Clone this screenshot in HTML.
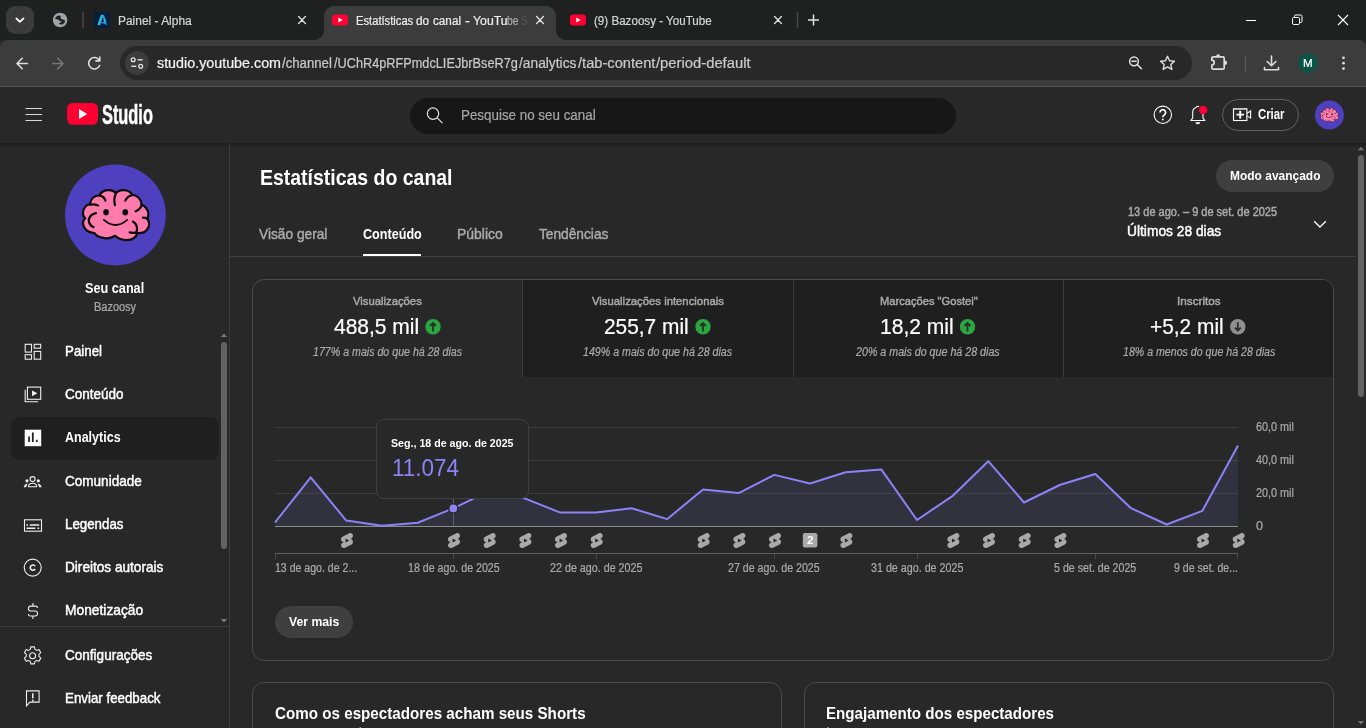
<!DOCTYPE html>
<html lang="pt-BR">
<head>
<meta charset="utf-8">
<title>Estatísticas do canal - YouTube Studio</title>
<style>
*{box-sizing:border-box;margin:0;padding:0}
html,body{width:1366px;height:728px;overflow:hidden;background:#282828}
body{position:relative;font-family:"Liberation Sans",sans-serif;color:#fff}
.a{position:absolute}
.t{position:absolute;white-space:nowrap;line-height:1;transform-origin:0 50%;-webkit-text-stroke:0.22px}
svg{position:absolute;overflow:visible}
#txt{left:0;top:0;width:1366px;height:728px;will-change:transform}
/* chrome */
#strip{left:0;top:0;width:1366px;height:40px;background:#1f2020}
#toolbar{left:0;top:40px;width:1366px;height:46px;background:#3c3c3c;border-radius:8px 8px 0 0}
#tbsep{left:0;top:86px;width:1366px;height:1px;background:#4f4f4f}
#acttab{left:324px;top:6px;width:232px;height:34px;background:#3c3c3c;border-radius:10px 10px 0 0}
#acttab:before,#acttab:after{content:"";position:absolute;bottom:0;width:10px;height:10px}
#acttab:before{left:-10px;background:radial-gradient(circle at 0 0,rgba(0,0,0,0) 9.5px,#3c3c3c 10.5px)}
#acttab:after{right:-10px;background:radial-gradient(circle at 100% 0,rgba(0,0,0,0) 9.5px,#3c3c3c 10.5px)}
#tabdd{left:6px;top:6px;width:28px;height:28px;border-radius:9px;background:#3b3b3b}
#omni{left:120px;top:46px;width:1072px;height:34px;border-radius:17px;background:#282828}
#siteinfo{left:125px;top:51px;width:24px;height:24px;border-radius:12px;background:#3c3c3c}
#prof{left:1298px;top:53px;width:20px;height:20px;border-radius:10px;background:#0b5345}
/* yt header */
#ythead{left:0;top:87px;width:1366px;height:56px;background:#282828}
#ytshadow{left:0;top:143px;width:1366px;height:5px;background:linear-gradient(rgba(0,0,0,.28),rgba(0,0,0,0))}
#search{left:410px;top:98px;width:546px;height:36px;border-radius:18px;background:#171717}
#criar{left:1222px;top:99px;width:77px;height:32px;border-radius:16px;border:1px solid #606060}
/* sidebar */
#sideline{left:229px;top:143px;width:1px;height:585px;background:#3d3d3d}
#sel{left:11px;top:417px;width:208px;height:43px;border-radius:9px;background:#1f1f1f}
#sdiv{left:0;top:626px;width:229px;height:1px;background:#3d3d3d}
#sthumb{left:221px;top:342px;width:6px;height:207px;border-radius:3px;background:#626262}
/* main */
#tabline{left:230px;top:256px;width:1126px;height:1px;background:#3f3f3f}
#tabul{left:363px;top:254px;width:58px;height:2px;background:#fff}
#modo{left:1216px;top:160px;width:118px;height:32px;border-radius:16px;background:#3f3f3f}
#pthumb{left:1358px;top:155px;width:6px;height:242px;border-radius:3px;background:#626262}
.card{border:1px solid #4c4c4c;border-radius:12px}
#card1{left:252px;top:279px;width:1082px;height:382px;overflow:hidden}
#card2{left:252px;top:682px;width:530px;height:80px}
#card3{left:804px;top:682px;width:530px;height:80px}
.mt{position:absolute;top:0;height:97px;background:#1f1f1f;border-left:1px solid #3d3d3d}
#vermais{left:275px;top:606px;width:78px;height:32px;border-radius:16px;background:#3f3f3f}
#tip{left:376px;top:419px;width:153px;height:80px;border-radius:8px;background:#282828;border:1px solid #404040}
</style>
</head>
<body>
<!-- browser chrome -->
<div class="a" id="strip"></div>
<div class="a" id="tabdd"></div>
<div class="a" id="acttab"></div>
<div class="a" id="toolbar"></div>
<div class="a" id="tbsep"></div>
<div class="a" id="omni"></div>
<div class="a" id="siteinfo"></div>
<div class="a" id="prof"></div>
<svg class="a" style="left:0;top:0" width="1366" height="87" viewBox="0 0 1366 87" fill="none">
<!-- tab search chevron -->
<path d="M16.300 18.300l3.600 3.600 3.600-3.600" stroke="#fff" stroke-width="1.7" stroke-linecap="round" stroke-linejoin="round"/>
<!-- globe tab -->
<circle cx="60.100" cy="20" r="7.250" fill="#a1a4a8"/>
<g transform="translate(50 8) scale(0.04686)"><path d="M108 238C118 190 150 160 200 158L232 170C215 195 222 222 250 236C280 248 305 255 322 272C322 300 305 330 270 348C240 356 205 352 185 325C215 322 240 305 248 282C225 285 200 278 185 258C165 240 135 235 108 238Z" fill="#1f2020"/></g>
<path d="M83 12v16" stroke="#4a4a4a" stroke-width="1.4"/>
<!-- alpha favicon -->
<rect x="94" y="12" width="16.100" height="16" fill="#061f3d"/>
<path d="M101 14.800h2.200l-3 10.100h-2.700z" fill="#27c8ea"/>
<path d="M102.500 15.400l1.300-.4 2.800 7.600-2.400.3z" fill="#2fb0f0"/>
<path d="M99.800 22.600c2.400-.5 4.800.1 7 1.800" stroke="#2a86d8" stroke-width="1.400"/>
<!-- tab close x -->
<path d="M298.6 16.600l6.800 6.800m0-6.800l-6.800 6.800M536.600 16.600l6.800 6.800m0-6.800l-6.800 6.800M774.600 16.600l6.800 6.800m0-6.800l-6.800 6.800" stroke="#dcdcdc" stroke-width="1.4" stroke-linecap="round"/>
<!-- yt favicons -->
<rect x="332" y="14.500" width="16" height="11" rx="3" fill="#ff0033"/>
<path d="M338.300 17.400v5.200l4.400-2.600z" fill="#fff"/>
<rect x="570" y="14.500" width="16" height="11" rx="3" fill="#ff0033"/>
<path d="M576.300 17.400v5.200l4.400-2.600z" fill="#fff"/>
<!-- tab separator + new tab -->
<path d="M797.500 12v16" stroke="#4a4a4a" stroke-width="1.4"/>
<path d="M813.500 14.500v11M808 20h11" stroke="#e3e3e3" stroke-width="1.500"/>
<!-- window controls -->
<path d="M1246 20.500h10" stroke="#fff" stroke-width="1"/>
<rect x="1292.500" y="17.500" width="7" height="7" rx="1.2" stroke="#fff" stroke-width="1"/>
<path d="M1294.500 17.500v-1.200a1.300 1.300 0 0 1 1.300-1.300h4.900a1.300 1.300 0 0 1 1.300 1.300v4.900a1.300 1.300 0 0 1-1.300 1.300h-1.200" stroke="#fff" stroke-width="1"/>
<path d="M1338 15l10 10m0-10l-10 10" stroke="#fff" stroke-width="1.100"/>
<!-- nav: back, forward, reload -->
<path d="M27.300 63.500H17.200m5-5.200l-5.200 5.200 5.200 5.200" stroke="#dedede" stroke-width="1.600" stroke-linejoin="round" stroke-linecap="round"/>
<path d="M52.700 63.500h10.100m-5-5.200l5.200 5.200-5.200 5.200" stroke="#777" stroke-width="1.600" stroke-linejoin="round" stroke-linecap="round"/>
<path d="M99.200 60.200A5.700 5.700 0 1 0 99.600 65.500" stroke="#dedede" stroke-width="1.600" stroke-linecap="round"/>
<path d="M99.800 57v3.900h-3.900" stroke="#dedede" stroke-width="1.600" stroke-linejoin="round" stroke-linecap="round"/>
<!-- site info (tune) -->
<circle cx="133.200" cy="59.800" r="1.900" stroke="#e3e3e3" stroke-width="1.300"/>
<path d="M137.600 59.800h5" stroke="#e3e3e3" stroke-width="1.400"/>
<circle cx="140.700" cy="66.300" r="1.900" stroke="#e3e3e3" stroke-width="1.300"/>
<path d="M131.300 66.300h5" stroke="#e3e3e3" stroke-width="1.400"/>
<!-- zoom icon -->
<circle cx="1134" cy="61.300" r="4.400" stroke="#dedede" stroke-width="1.500"/>
<path d="M1137.300 64.600l4.200 4.200M1131.800 61.300h4.400" stroke="#dedede" stroke-width="1.500" stroke-linecap="round"/>
<!-- star -->
<path d="M1167.500 56.300l2.050 4.500 4.900.5-3.650 3.300 1.050 4.800-4.350-2.500-4.350 2.500 1.050-4.800-3.650-3.300 4.900-.5z" stroke="#dedede" stroke-width="1.400" stroke-linejoin="round"/>
<!-- extensions puzzle -->
<path d="M1213.300 56.800H1222.700a1.500 1.500 0 0 1 1.500 1.500V67.700a1.500 1.500 0 0 1-1.500 1.500H1213.300a1.500 1.500 0 0 1-1.500-1.500V65a2.400 2.400 0 0 0 0-4.800V58.300a1.500 1.500 0 0 1 1.500-1.500z" stroke="#dedede" stroke-width="1.700" stroke-linejoin="round"/>
<path d="M1216.200 56.200a1.900 2 0 0 1 3.800 0zM1224.800 60.600a2.300 2.200 0 0 1 0 4.400z" fill="#dedede"/>
<path d="M1245.500 55.500v16" stroke="#5a5a5a" stroke-width="1.200"/>
<!-- download -->
<path d="M1271.500 56v9.500m-4.300-4l4.300 4.200 4.300-4.200M1264.500 67.500v2.300h14v-2.300" stroke="#dedede" stroke-width="1.600" stroke-linejoin="round" stroke-linecap="round"/>
<!-- kebab -->
<circle cx="1343.500" cy="57.800" r="1.400" fill="#dedede"/><circle cx="1343.500" cy="63.200" r="1.400" fill="#dedede"/><circle cx="1343.500" cy="68.600" r="1.400" fill="#dedede"/>
</svg>

<!-- youtube header -->
<div class="a" id="ythead"></div>
<div class="a" id="ytshadow"></div>
<div class="a" id="search"></div>
<div class="a" id="criar"></div>
<svg class="a" style="left:0;top:87px" width="1366" height="60" viewBox="0 87 1366 60" fill="none" stroke="#fff" stroke-width="1.100">
<!-- hamburger -->
<path d="M25.500 108.500h16.500M25.500 114.500h16.500M25.500 120.500h16.500" stroke="#d8d8d8" stroke-width="1"/>
<!-- yt logo -->
<rect x="67.100" y="103" width="30.900" height="21.800" rx="5.500" fill="#ff0033" stroke="none"/>
<path d="M79 109v10l8.200-5z" fill="#fff" stroke="none"/>
<!-- search -->
<circle cx="433" cy="113.600" r="5.700" stroke="#e6e6e6" stroke-width="1.200"/><path d="M437.200 117.800l5.300 5.300" stroke="#e6e6e6" stroke-width="1.200"/>
<!-- help -->
<circle cx="1162.800" cy="114.800" r="8.700"/>
<path d="M1160 112.600a2.800 2.800 0 1 1 4.300 2.300c-.9.600-1.500 1.100-1.500 2.300" stroke-width="1.700"/><circle cx="1162.800" cy="119.500" r="1" fill="#fff" stroke="none"/>
<!-- bell -->
<path d="M1196 107.600a5 5 0 0 0-3.300 4.800v5.700l-1.900 2.400h14.100l-1.900-2.400v-5.700" stroke-linejoin="round"/>
<path d="M1196.300 107.500a1.400 1.400 0 0 1 2.600-.4" />
<path d="M1195.400 122.300a2.400 2 0 0 0 4.800 0z" fill="#fff" stroke="none"/>
<circle cx="1203.100" cy="110" r="4.200" fill="#ff0033" stroke="none"/>
<!-- create -->
<rect x="1233.500" y="108.700" width="13.400" height="11.800"/>
<path d="M1247 113.300l3.600-2.200v7l-3.600-2.200"/><path d="M1233.500 109.200h13.400" stroke="#bbb" stroke-width="1.200"/>
<path d="M1240.200 110.800v7.600M1236.400 114.600h7.600" stroke-width="1.900"/>
<!-- avatar -->
<circle cx="1329.400" cy="114.900" r="14.500" fill="#4f40c0" stroke="none"/>
<g transform="translate(1329.4 114.9) scale(0.02663) translate(-475 -365)"><path d="M135 340 C140 290 170 258 208 250 C215 195 255 160 305 160 C325 120 365 103 410 105 C440 106 462 118 478 138 C495 115 525 103 560 105 C600 107 630 125 645 152 C700 160 740 200 745 255 C790 280 815 315 815 355 C815 375 810 390 802 402 C825 430 830 475 805 510 C785 540 745 555 700 552 C690 595 650 625 590 625 C540 625 500 608 470 580 C430 605 380 612 335 600 C295 592 270 575 255 552 C200 550 155 520 140 475 C130 445 138 415 158 398 C140 385 132 362 135 340 Z" fill="#ff7bac" stroke="#0d0d0d" stroke-width="17" stroke-linejoin="round"/><path d="M308 162 Q360 172 368 215 M478 138 Q450 195 468 262 M642 160 Q595 170 575 215 M745 262 Q730 310 682 325 M206 256 Q250 248 292 265 M270 345 Q208 360 195 412 Q196 470 245 490 M655 432 Q712 470 692 545 Q660 556 620 545 M806 402 Q785 393 758 392" fill="none" stroke="#0d0d0d" stroke-width="17" stroke-linecap="round"/><ellipse cx="375" cy="335" rx="30" ry="33" fill="#0d0d0d"/><ellipse cx="575" cy="335" rx="30" ry="33" fill="#0d0d0d"/><path d="M352 415 Q472 522 595 415" fill="none" stroke="#0d0d0d" stroke-width="19" stroke-linecap="round"/></g>
</svg>
<!-- sidebar -->
<div class="a" id="sideline"></div>
<div class="a" id="sel"></div>
<div class="a" id="sdiv"></div>
<div class="a" id="sthumb"></div>
<svg class="a" style="left:0;top:0" width="240" height="728" viewBox="0 0 240 728" fill="none" stroke="#ededed" stroke-width="1.1">
<circle cx="115.400" cy="215" r="50.400" fill="#4f40c0" stroke="none"/>
<g transform="translate(70 180) scale(0.09615)"><path d="M135 340 C140 290 170 258 208 250 C215 195 255 160 305 160 C325 120 365 103 410 105 C440 106 462 118 478 138 C495 115 525 103 560 105 C600 107 630 125 645 152 C700 160 740 200 745 255 C790 280 815 315 815 355 C815 375 810 390 802 402 C825 430 830 475 805 510 C785 540 745 555 700 552 C690 595 650 625 590 625 C540 625 500 608 470 580 C430 605 380 612 335 600 C295 592 270 575 255 552 C200 550 155 520 140 475 C130 445 138 415 158 398 C140 385 132 362 135 340 Z" fill="#ff7bac" stroke="#0d0d0d" stroke-width="23" stroke-linejoin="round"/><path d="M308 162 Q360 172 368 215 M478 138 Q450 195 468 262 M642 160 Q595 170 575 215 M745 262 Q730 310 682 325 M206 256 Q250 248 292 265 M270 345 Q208 360 195 412 Q196 470 245 490 M655 432 Q712 470 692 545 Q660 556 620 545 M806 402 Q785 393 758 392" fill="none" stroke="#0d0d0d" stroke-width="23" stroke-linecap="round"/><ellipse cx="375" cy="335" rx="30" ry="33" fill="#0d0d0d"/><ellipse cx="575" cy="335" rx="30" ry="33" fill="#0d0d0d"/><path d="M352 415 Q472 522 595 415" fill="none" stroke="#0d0d0d" stroke-width="19" stroke-linecap="round"/></g>
<!-- painel -->
<rect x="25.200" y="344.300" width="6.300" height="7.800"/><rect x="34.200" y="344.300" width="6.500" height="3.900"/>
<rect x="25.200" y="354.700" width="6.300" height="4.500"/><rect x="34.200" y="351.400" width="6.500" height="7.800"/>
<!-- conteudo -->
<rect x="27.400" y="387.100" width="13.300" height="12.200"/><path d="M25.200 389.800v12h13"/>
<path d="M32 390.400v5.800l5.400-2.900z" fill="#ededed" stroke="none"/>
<!-- analytics -->
<rect x="24.700" y="429.700" width="16.500" height="16.500" fill="#fff" stroke="none"/>
<path d="M28.200 436.500h1.700v5.500h-1.700zM31.900 432.600h1.800v9.400h-1.800zM35.900 439.700h1.700v2.300h-1.700z" fill="#1f1f1f" stroke="none"/>
<!-- comunidade -->
<circle cx="32.600" cy="479.100" r="2.500"/><path d="M28.500 486.800c0-2 1.800-3.500 4.100-3.500s4.100 1.500 4.100 3.500z" stroke-linejoin="round"/>
<circle cx="27" cy="480.800" r="1.600" fill="#ededed" stroke="none"/><circle cx="38.300" cy="480.800" r="1.600" fill="#ededed" stroke="none"/>
<path d="M23.700 487.300c.200-2.200 1.600-3.600 3.900-3.900l-1.500 3.900zM41.600 487.300c-.200-2.200-1.600-3.600-3.900-3.900l1.500 3.900z" fill="#ededed" stroke="none"/>
<!-- legendas -->
<rect x="24.500" y="519.800" width="17" height="11.400"/>
<path d="M26.500 524.900h1.500M29.800 524.900h9.400M26.500 528.300h8.800M37.500 528.300h1.700" stroke-width="1.500"/>
<!-- copyright -->
<circle cx="32.700" cy="567.600" r="8.500"/>
<path d="M35.100 566.300a2.600 2.600 0 1 0 0 2.700" stroke-width="1.600"/>
<!-- monetizacao -->
<path d="M32.900 602.900v3.200M32.900 616v3M37.400 608v-.4c0-.9-.7-1.500-1.700-1.500h-5c-1.400 0-2.300 1-2.300 2.400s.9 2.500 2.300 2.500h4.500c1.400 0 2.300 1 2.300 2.500s-.9 2.500-2.300 2.500h-5c-1 0-1.700-.6-1.700-1.500v-.4"/>
<!-- gear -->
<circle cx="32.600" cy="655.700" r="3"/>
<path d="M30.800 646.900h3.600l.5 2.500 1.700 1 2.400-.8 1.800 3.100-1.900 1.700v2l1.900 1.700-1.800 3.100-2.400-.8-1.700 1-.5 2.500h-3.600l-.5-2.500-1.700-1-2.400.8-1.800-3.100 1.900-1.700v-2l-1.900-1.700 1.800-3.100 2.400.8 1.700-1z" stroke-linejoin="round"/>
<!-- feedback -->
<path d="M26.500 690.900h12.600v11.200h-9.100l-3.500 3.700z" stroke-linejoin="miter"/>
<path d="M32.800 693.300v5.200M32.800 699.800v1.600" stroke-width="1.500"/>
<!-- scroll arrows -->
<path d="M220.800 337l3.200-3.400 3.200 3.400zM220.800 619l3.200 3.400 3.200-3.400z" fill="#7a7a7a" stroke="none"/>
</svg>
<!-- main -->
<div class="a" id="tabline"></div>
<div class="a" id="tabul"></div>
<div class="a" id="modo"></div>
<div class="a" id="pthumb"></div>
<div class="a card" id="card1">
<div class="mt" style="left:269px;width:271px"></div>
<div class="mt" style="left:540px;width:270px"></div>
<div class="mt" style="left:810px;width:271px"></div>
</div>
<div class="a card" id="card2"></div>
<div class="a card" id="card3"></div>
<div class="a" id="vermais"></div>
<svg class="a" style="left:0;top:0" width="1366" height="728" viewBox="0 0 1366 728">
<path d="M275 427.5H1238" stroke="#3b3b3b" stroke-width="1"/>
<path d="M275 460.5H1238" stroke="#3b3b3b" stroke-width="1"/>
<path d="M275 493.5H1238" stroke="#3b3b3b" stroke-width="1"/>
<polygon points="275,526 275.0,522.5 310.7,477.3 346.3,520.6 382.0,525.8 417.7,522.8 453.3,508.4 489.0,491 524.7,498.4 560.3,512.6 596.0,512.6 631.7,508.2 667.3,519.1 703.0,489.4 738.7,493.1 774.3,474.9 810.0,483.5 845.7,472.3 881.3,469.4 917.0,520 952.7,495.8 988.3,461.2 1024.0,502.5 1059.7,485 1095.3,474 1131.0,508.2 1166.7,524.5 1202.3,510.9 1238.0,445.4 1238,526" fill="#8b83f6" fill-opacity="0.11"/>
<path d="M275 526.5H1238" stroke="#8c8c8c" stroke-width="1"/>
<polyline points="275.0,522.5 310.7,477.3 346.3,520.6 382.0,525.8 417.7,522.8 453.3,508.4 489.0,491 524.7,498.4 560.3,512.6 596.0,512.6 631.7,508.2 667.3,519.1 703.0,489.4 738.7,493.1 774.3,474.9 810.0,483.5 845.7,472.3 881.3,469.4 917.0,520 952.7,495.8 988.3,461.2 1024.0,502.5 1059.7,485 1095.3,474 1131.0,508.2 1166.7,524.5 1202.3,510.9 1238.0,445.4" fill="none" stroke="#8b83f6" stroke-width="2" stroke-linejoin="round"/>
<path d="M453.5 499V526" stroke="#626262" stroke-width="1"/>
<path d="M275 553.5H1238" stroke="#5e5e5e" stroke-width="1"/>
<path d="M275.5 554V559" stroke="#474747" stroke-width="1"/>
<path d="M453.5 554V559" stroke="#474747" stroke-width="1"/>
<path d="M596.5 554V559" stroke="#474747" stroke-width="1"/>
<path d="M774.5 554V559" stroke="#474747" stroke-width="1"/>
<path d="M917.5 554V559" stroke="#474747" stroke-width="1"/>
<path d="M1095.5 554V559" stroke="#474747" stroke-width="1"/>
<path d="M1237.5 554V559" stroke="#474747" stroke-width="1"/>
<circle cx="453.3" cy="508.4" r="4.6" fill="#8b83f6" stroke="#282828" stroke-width="1.4"/>
<path transform="translate(338.0 531.6) scale(0.75)" fill="#a9a9a9" fill-rule="evenodd" d="M17.77 10.32l-1.2-.5L18 9.06c1.84-.96 2.53-3.23 1.56-5.06s-3.24-2.53-5.07-1.56L6 6.94c-1.29.68-2.07 2.04-2 3.49.07 1.42.93 2.67 2.22 3.25.03.01 1.2.5 1.2.5L6 14.93c-1.83.97-2.53 3.24-1.56 5.07.97 1.83 3.24 2.53 5.07 1.56l8.5-4.5c1.29-.68 2.06-2.04 1.99-3.49-.07-1.42-.94-2.68-2.23-3.25zM10 14.65v-5.3L15 12l-5 2.65z"/>
<path transform="translate(445.0 531.6) scale(0.75)" fill="#a9a9a9" fill-rule="evenodd" d="M17.77 10.32l-1.2-.5L18 9.06c1.84-.96 2.53-3.23 1.56-5.06s-3.24-2.53-5.07-1.56L6 6.94c-1.29.68-2.07 2.04-2 3.49.07 1.42.93 2.67 2.22 3.25.03.01 1.2.5 1.2.5L6 14.93c-1.83.97-2.53 3.24-1.56 5.07.97 1.83 3.24 2.53 5.07 1.56l8.5-4.5c1.29-.68 2.06-2.04 1.99-3.49-.07-1.42-.94-2.68-2.23-3.25zM10 14.65v-5.3L15 12l-5 2.65z"/>
<path transform="translate(480.7 531.6) scale(0.75)" fill="#a9a9a9" fill-rule="evenodd" d="M17.77 10.32l-1.2-.5L18 9.06c1.84-.96 2.53-3.23 1.56-5.06s-3.24-2.53-5.07-1.56L6 6.94c-1.29.68-2.07 2.04-2 3.49.07 1.42.93 2.67 2.22 3.25.03.01 1.2.5 1.2.5L6 14.93c-1.83.97-2.53 3.24-1.56 5.07.97 1.83 3.24 2.53 5.07 1.56l8.5-4.5c1.29-.68 2.06-2.04 1.99-3.49-.07-1.42-.94-2.68-2.23-3.25zM10 14.65v-5.3L15 12l-5 2.65z"/>
<path transform="translate(516.4 531.6) scale(0.75)" fill="#a9a9a9" fill-rule="evenodd" d="M17.77 10.32l-1.2-.5L18 9.06c1.84-.96 2.53-3.23 1.56-5.06s-3.24-2.53-5.07-1.56L6 6.94c-1.29.68-2.07 2.04-2 3.49.07 1.42.93 2.67 2.22 3.25.03.01 1.2.5 1.2.5L6 14.93c-1.83.97-2.53 3.24-1.56 5.07.97 1.83 3.24 2.53 5.07 1.56l8.5-4.5c1.29-.68 2.06-2.04 1.99-3.49-.07-1.42-.94-2.68-2.23-3.25zM10 14.65v-5.3L15 12l-5 2.65z"/>
<path transform="translate(552.0 531.6) scale(0.75)" fill="#a9a9a9" fill-rule="evenodd" d="M17.77 10.32l-1.2-.5L18 9.06c1.84-.96 2.53-3.23 1.56-5.06s-3.24-2.53-5.07-1.56L6 6.94c-1.29.68-2.07 2.04-2 3.49.07 1.42.93 2.67 2.22 3.25.03.01 1.2.5 1.2.5L6 14.93c-1.83.97-2.53 3.24-1.56 5.07.97 1.83 3.24 2.53 5.07 1.56l8.5-4.5c1.29-.68 2.06-2.04 1.99-3.49-.07-1.42-.94-2.68-2.23-3.25zM10 14.65v-5.3L15 12l-5 2.65z"/>
<path transform="translate(587.7 531.6) scale(0.75)" fill="#a9a9a9" fill-rule="evenodd" d="M17.77 10.32l-1.2-.5L18 9.06c1.84-.96 2.53-3.23 1.56-5.06s-3.24-2.53-5.07-1.56L6 6.94c-1.29.68-2.07 2.04-2 3.49.07 1.42.93 2.67 2.22 3.25.03.01 1.2.5 1.2.5L6 14.93c-1.83.97-2.53 3.24-1.56 5.07.97 1.83 3.24 2.53 5.07 1.56l8.5-4.5c1.29-.68 2.06-2.04 1.99-3.49-.07-1.42-.94-2.68-2.23-3.25zM10 14.65v-5.3L15 12l-5 2.65z"/>
<path transform="translate(694.7 531.6) scale(0.75)" fill="#a9a9a9" fill-rule="evenodd" d="M17.77 10.32l-1.2-.5L18 9.06c1.84-.96 2.53-3.23 1.56-5.06s-3.24-2.53-5.07-1.56L6 6.94c-1.29.68-2.07 2.04-2 3.49.07 1.42.93 2.67 2.22 3.25.03.01 1.2.5 1.2.5L6 14.93c-1.83.97-2.53 3.24-1.56 5.07.97 1.83 3.24 2.53 5.07 1.56l8.5-4.5c1.29-.68 2.06-2.04 1.99-3.49-.07-1.42-.94-2.68-2.23-3.25zM10 14.65v-5.3L15 12l-5 2.65z"/>
<path transform="translate(730.4 531.6) scale(0.75)" fill="#a9a9a9" fill-rule="evenodd" d="M17.77 10.32l-1.2-.5L18 9.06c1.84-.96 2.53-3.23 1.56-5.06s-3.24-2.53-5.07-1.56L6 6.94c-1.29.68-2.07 2.04-2 3.49.07 1.42.93 2.67 2.22 3.25.03.01 1.2.5 1.2.5L6 14.93c-1.83.97-2.53 3.24-1.56 5.07.97 1.83 3.24 2.53 5.07 1.56l8.5-4.5c1.29-.68 2.06-2.04 1.99-3.49-.07-1.42-.94-2.68-2.23-3.25zM10 14.65v-5.3L15 12l-5 2.65z"/>
<path transform="translate(766.0 531.6) scale(0.75)" fill="#a9a9a9" fill-rule="evenodd" d="M17.77 10.32l-1.2-.5L18 9.06c1.84-.96 2.53-3.23 1.56-5.06s-3.24-2.53-5.07-1.56L6 6.94c-1.29.68-2.07 2.04-2 3.49.07 1.42.93 2.67 2.22 3.25.03.01 1.2.5 1.2.5L6 14.93c-1.83.97-2.53 3.24-1.56 5.07.97 1.83 3.24 2.53 5.07 1.56l8.5-4.5c1.29-.68 2.06-2.04 1.99-3.49-.07-1.42-.94-2.68-2.23-3.25zM10 14.65v-5.3L15 12l-5 2.65z"/>
<path transform="translate(837.4 531.6) scale(0.75)" fill="#a9a9a9" fill-rule="evenodd" d="M17.77 10.32l-1.2-.5L18 9.06c1.84-.96 2.53-3.23 1.56-5.06s-3.24-2.53-5.07-1.56L6 6.94c-1.29.68-2.07 2.04-2 3.49.07 1.42.93 2.67 2.22 3.25.03.01 1.2.5 1.2.5L6 14.93c-1.83.97-2.53 3.24-1.56 5.07.97 1.83 3.24 2.53 5.07 1.56l8.5-4.5c1.29-.68 2.06-2.04 1.99-3.49-.07-1.42-.94-2.68-2.23-3.25zM10 14.65v-5.3L15 12l-5 2.65z"/>
<path transform="translate(944.4 531.6) scale(0.75)" fill="#a9a9a9" fill-rule="evenodd" d="M17.77 10.32l-1.2-.5L18 9.06c1.84-.96 2.53-3.23 1.56-5.06s-3.24-2.53-5.07-1.56L6 6.94c-1.29.68-2.07 2.04-2 3.49.07 1.42.93 2.67 2.22 3.25.03.01 1.2.5 1.2.5L6 14.93c-1.83.97-2.53 3.24-1.56 5.07.97 1.83 3.24 2.53 5.07 1.56l8.5-4.5c1.29-.68 2.06-2.04 1.99-3.49-.07-1.42-.94-2.68-2.23-3.25zM10 14.65v-5.3L15 12l-5 2.65z"/>
<path transform="translate(980.0 531.6) scale(0.75)" fill="#a9a9a9" fill-rule="evenodd" d="M17.77 10.32l-1.2-.5L18 9.06c1.84-.96 2.53-3.23 1.56-5.06s-3.24-2.53-5.07-1.56L6 6.94c-1.29.68-2.07 2.04-2 3.49.07 1.42.93 2.67 2.22 3.25.03.01 1.2.5 1.2.5L6 14.93c-1.83.97-2.53 3.24-1.56 5.07.97 1.83 3.24 2.53 5.07 1.56l8.5-4.5c1.29-.68 2.06-2.04 1.99-3.49-.07-1.42-.94-2.68-2.23-3.25zM10 14.65v-5.3L15 12l-5 2.65z"/>
<path transform="translate(1015.7 531.6) scale(0.75)" fill="#a9a9a9" fill-rule="evenodd" d="M17.77 10.32l-1.2-.5L18 9.06c1.84-.96 2.53-3.23 1.56-5.06s-3.24-2.53-5.07-1.56L6 6.94c-1.29.68-2.07 2.04-2 3.49.07 1.42.93 2.67 2.22 3.25.03.01 1.2.5 1.2.5L6 14.93c-1.83.97-2.53 3.24-1.56 5.07.97 1.83 3.24 2.53 5.07 1.56l8.5-4.5c1.29-.68 2.06-2.04 1.99-3.49-.07-1.42-.94-2.68-2.23-3.25zM10 14.65v-5.3L15 12l-5 2.65z"/>
<path transform="translate(1051.4 531.6) scale(0.75)" fill="#a9a9a9" fill-rule="evenodd" d="M17.77 10.32l-1.2-.5L18 9.06c1.84-.96 2.53-3.23 1.56-5.06s-3.24-2.53-5.07-1.56L6 6.94c-1.29.68-2.07 2.04-2 3.49.07 1.42.93 2.67 2.22 3.25.03.01 1.2.5 1.2.5L6 14.93c-1.83.97-2.53 3.24-1.56 5.07.97 1.83 3.24 2.53 5.07 1.56l8.5-4.5c1.29-.68 2.06-2.04 1.99-3.49-.07-1.42-.94-2.68-2.23-3.25zM10 14.65v-5.3L15 12l-5 2.65z"/>
<path transform="translate(1194.0 531.6) scale(0.75)" fill="#a9a9a9" fill-rule="evenodd" d="M17.77 10.32l-1.2-.5L18 9.06c1.84-.96 2.53-3.23 1.56-5.06s-3.24-2.53-5.07-1.56L6 6.94c-1.29.68-2.07 2.04-2 3.49.07 1.42.93 2.67 2.22 3.25.03.01 1.2.5 1.2.5L6 14.93c-1.83.97-2.53 3.24-1.56 5.07.97 1.83 3.24 2.53 5.07 1.56l8.5-4.5c1.29-.68 2.06-2.04 1.99-3.49-.07-1.42-.94-2.68-2.23-3.25zM10 14.65v-5.3L15 12l-5 2.65z"/>
<path transform="translate(1229.7 531.6) scale(0.75)" fill="#a9a9a9" fill-rule="evenodd" d="M17.77 10.32l-1.2-.5L18 9.06c1.84-.96 2.53-3.23 1.56-5.06s-3.24-2.53-5.07-1.56L6 6.94c-1.29.68-2.07 2.04-2 3.49.07 1.42.93 2.67 2.22 3.25.03.01 1.2.5 1.2.5L6 14.93c-1.83.97-2.53 3.24-1.56 5.07.97 1.83 3.24 2.53 5.07 1.56l8.5-4.5c1.29-.68 2.06-2.04 1.99-3.49-.07-1.42-.94-2.68-2.23-3.25zM10 14.65v-5.3L15 12l-5 2.65z"/>
<rect x="802.8" y="533" width="14.6" height="14.4" rx="2" fill="#a9a9a9"/>
<path d="M359.500 727h1.500M827.500 727h1.500" stroke="#9a9a9a" stroke-width="1" transform="translate(0 .5)"/>
</svg>
<div class="a" id="tip"></div>
<svg class="a" style="left:0;top:0" width="1366" height="728" viewBox="0 0 1366 728" fill="none">
<circle cx="433" cy="326.8" r="7.700" fill="#2ba640"/><path d="M433 331.40000000000003v-7.200M430 326.0l3-3 3 3" stroke="#23322a" stroke-width="1.800" fill="none"/><circle cx="703" cy="326.8" r="7.700" fill="#2ba640"/><path d="M703 331.40000000000003v-7.200M700 326.0l3-3 3 3" stroke="#23322a" stroke-width="1.800" fill="none"/><circle cx="967.5" cy="326.8" r="7.700" fill="#2ba640"/><path d="M967.5 331.40000000000003v-7.200M964.5 326.0l3-3 3 3" stroke="#23322a" stroke-width="1.800" fill="none"/><circle cx="1237.8" cy="326.8" r="7.700" fill="#909090"/><path d="M1237.8 322.2v7.200M1234.8 327.6l3 3 3-3" stroke="#2c2c2c" stroke-width="1.800" fill="none"/>
<path d="M1314.200 221.200l5.800 5.800 5.800-5.800" stroke="#fff" stroke-width="1.300"/>
<path d="M1357.800 150.300l3.200-3.500 3.200 3.500zM1357.800 721l3.200 3.500 3.200-3.500z" fill="#747474"/>
</svg>
<div class="a" id="txt">
<span class="t" style="left:117.7px;top:15px;font-size:12px;color:#d4d4d4;transform:scaleX(0.9951);">Painel - Alpha</span>
<span class="t" style="left:356.0px;top:15px;font-size:12px;color:#ececec;transform:scaleX(0.9322);">Estatísticas</span>
<span class="t" style="left:416.4px;top:15px;font-size:12px;color:#ececec;transform:scaleX(0.9806);">do</span>
<span class="t" style="left:433.3px;top:15px;font-size:12px;color:#ececec;transform:scaleX(0.9760);">canal</span>
<span class="t" style="left:464.8px;top:15px;font-size:12px;color:#ececec;transform:scaleX(1.2250);">-</span>
<span class="t" style="left:472.5px;top:15px;font-size:12px;color:#ececec;transform:scaleX(1.0233);">YouTu</span>
<span class="t" style="left:507.3px;top:15px;font-size:12px;color:#a8a8a8;transform:scaleX(0.8608);">be</span>
<span class="t" style="left:520.7px;top:15px;font-size:12px;color:#555;transform:scaleX(0.8359);">S</span>
<span class="t" style="left:593.7px;top:15px;font-size:12px;color:#d4d4d4;transform:scaleX(0.9676);">(9) Bazoosy - YouTube</span>
<span class="t" style="left:157.0px;top:56.4px;font-size:14px;color:#f2f2f2;transform:scaleX(1.0214);">studio.youtube.com</span>
<span class="t" style="left:282.3px;top:56.4px;font-size:14px;color:#c9c9c9;transform:scaleX(0.9426);">/channel</span>
<span class="t" style="left:333.8px;top:56.4px;font-size:14px;color:#c9c9c9;transform:scaleX(0.9086);">/UChR4pRFPmdcLIEJbrBseR7g</span>
<span class="t" style="left:519.0px;top:56.4px;font-size:14px;color:#c9c9c9;transform:scaleX(0.9836);">/analytics</span>
<span class="t" style="left:577.7px;top:56.4px;font-size:14px;color:#c9c9c9;transform:scaleX(1.0468);">/tab-content</span>
<span class="t" style="left:656.4px;top:56.4px;font-size:14px;color:#c9c9c9;transform:scaleX(1.0568);">/period-default</span>
<span class="t" style="left:1303.0px;top:58.2px;font-size:11.5px;transform:scaleX(1.0111);">M</span>
<span class="t" style="left:101.7px;top:101.7px;font-size:27px;font-weight:700;-webkit-text-stroke:0;transform:scaleX(0.6061);-webkit-text-stroke:0.5px;">Studio</span>
<span class="t" style="left:461.2px;top:107.4px;font-size:15px;color:#a6a6a6;transform:scaleX(0.8918);">Pesquise no seu canal</span>
<span class="t" style="left:1258.2px;top:107.3px;font-size:14px;font-weight:700;-webkit-text-stroke:0;transform:scaleX(0.8107);">Criar</span>
<span class="t" style="left:85.1px;top:280.9px;font-size:14.5px;font-weight:700;-webkit-text-stroke:0;transform:scaleX(0.8744);">Seu canal</span>
<span class="t" style="left:93.7px;top:301px;font-size:12px;color:#aaa;transform:scaleX(0.9146);">Bazoosy</span>
<span class="t" style="left:64.7px;top:344px;font-size:14.5px;transform:scaleX(0.9178);-webkit-text-stroke:0.45px;">Painel</span>
<span class="t" style="left:64.7px;top:387.2px;font-size:14.5px;transform:scaleX(0.9302);-webkit-text-stroke:0.45px;">Conteúdo</span>
<span class="t" style="left:64.8px;top:430.4px;font-size:14.5px;font-weight:700;-webkit-text-stroke:0;transform:scaleX(0.8622);">Analytics</span>
<span class="t" style="left:64.7px;top:473.6px;font-size:14.5px;transform:scaleX(0.9339);-webkit-text-stroke:0.45px;">Comunidade</span>
<span class="t" style="left:64.7px;top:517px;font-size:14.5px;transform:scaleX(0.9183);-webkit-text-stroke:0.45px;">Legendas</span>
<span class="t" style="left:64.7px;top:560px;font-size:14.5px;transform:scaleX(0.9383);-webkit-text-stroke:0.45px;">Direitos autorais</span>
<span class="t" style="left:64.7px;top:603px;font-size:14.5px;transform:scaleX(0.9511);-webkit-text-stroke:0.45px;">Monetização</span>
<span class="t" style="left:64.7px;top:647.8px;font-size:14.5px;transform:scaleX(0.9337);-webkit-text-stroke:0.45px;">Configurações</span>
<span class="t" style="left:64.7px;top:690.7px;font-size:14.5px;transform:scaleX(0.9184);-webkit-text-stroke:0.45px;">Enviar feedback</span>
<span class="t" style="left:259.8px;top:167.2px;font-size:22.4px;font-weight:700;-webkit-text-stroke:0;transform:scaleX(0.8690);">Estatísticas do canal</span>
<span class="t" style="left:259.0px;top:226.3px;font-size:15px;color:#aaa;transform:scaleX(0.9147);-webkit-text-stroke:0.45px;">Visão geral</span>
<span class="t" style="left:362.8px;top:226.3px;font-size:15px;font-weight:700;-webkit-text-stroke:0;transform:scaleX(0.8402);">Conteúdo</span>
<span class="t" style="left:457.3px;top:226.3px;font-size:15px;color:#aaa;transform:scaleX(0.9308);-webkit-text-stroke:0.45px;">Público</span>
<span class="t" style="left:539.0px;top:226.3px;font-size:15px;color:#aaa;transform:scaleX(0.9145);-webkit-text-stroke:0.45px;">Tendências</span>
<span class="t" style="left:1229.8px;top:169.2px;font-size:13.5px;font-weight:700;-webkit-text-stroke:0;transform:scaleX(0.8871);">Modo avançado</span>
<span class="t" style="left:1127.5px;top:206.2px;font-size:12px;color:#aaa;transform:scaleX(0.9158);-webkit-text-stroke:0.45px;">13 de ago. – 9 de set. de 2025</span>
<span class="t" style="left:1127.2px;top:222.7px;font-size:15px;transform:scaleX(0.9186);-webkit-text-stroke:0.45px;">Últimos 28 dias</span>
<span class="t" style="left:353.4px;top:295.1px;font-size:11.6px;color:#aaa;transform:scaleX(0.9733);-webkit-text-stroke:0.45px;">Visualizações</span>
<span class="t" style="left:333.7px;top:315.7px;font-size:22px;transform:scaleX(0.9543);">488,5 mil</span>
<span class="t" style="left:313.4px;top:345.7px;font-size:12px;color:#aaa;font-style:italic;transform:scaleX(0.8862);">177% a mais do que há 28 dias</span>
<span class="t" style="left:592.3px;top:295.1px;font-size:11.6px;color:#aaa;transform:scaleX(0.9760);-webkit-text-stroke:0.45px;">Visualizações intencionais</span>
<span class="t" style="left:603.7px;top:315.7px;font-size:22px;transform:scaleX(0.9487);">255,7 mil</span>
<span class="t" style="left:583.3px;top:345.7px;font-size:12px;color:#aaa;font-style:italic;transform:scaleX(0.8868);">149% a mais do que há 28 dias</span>
<span class="t" style="left:879.5px;top:295.1px;font-size:11.6px;color:#aaa;transform:scaleX(0.9609);-webkit-text-stroke:0.45px;">Marcações &quot;Gostei&quot;</span>
<span class="t" style="left:880.4px;top:315.7px;font-size:22px;transform:scaleX(0.9553);">18,2 mil</span>
<span class="t" style="left:856.3px;top:345.7px;font-size:12px;color:#aaa;font-style:italic;transform:scaleX(0.8900);">20% a mais do que há 28 dias</span>
<span class="t" style="left:1176.7px;top:295.1px;font-size:11.6px;color:#aaa;transform:scaleX(1.0122);-webkit-text-stroke:0.45px;">Inscritos</span>
<span class="t" style="left:1150.2px;top:315.7px;font-size:22px;transform:scaleX(0.9491);">+5,2 mil</span>
<span class="t" style="left:1122.7px;top:345.7px;font-size:12px;color:#aaa;font-style:italic;transform:scaleX(0.8842);">18% a menos do que há 28 dias</span>
<span class="t" style="left:1255.9px;top:421.3px;font-size:12px;color:#aaa;transform:scaleX(0.8993);">60,0 mil</span>
<span class="t" style="left:1255.9px;top:454.3px;font-size:12px;color:#aaa;transform:scaleX(0.8993);">40,0 mil</span>
<span class="t" style="left:1255.9px;top:487.3px;font-size:12px;color:#aaa;transform:scaleX(0.8993);">20,0 mil</span>
<span class="t" style="left:1255.9px;top:520.3px;font-size:12px;color:#aaa;transform:scaleX(1.0467);">0</span>
<span class="t" style="left:274.7px;top:562px;font-size:12px;color:#aaa;transform:scaleX(0.8799);">13 de ago. de 2...</span>
<span class="t" style="left:407.7px;top:562px;font-size:12px;color:#aaa;transform:scaleX(0.8865);">18 de ago. de 2025</span>
<span class="t" style="left:549.9px;top:562px;font-size:12px;color:#aaa;transform:scaleX(0.8943);">22 de ago. de 2025</span>
<span class="t" style="left:728.2px;top:562px;font-size:12px;color:#aaa;transform:scaleX(0.8865);">27 de ago. de 2025</span>
<span class="t" style="left:871.0px;top:562px;font-size:12px;color:#aaa;transform:scaleX(0.8933);">31 de ago. de 2025</span>
<span class="t" style="left:1054.3px;top:562px;font-size:12px;color:#aaa;transform:scaleX(0.8873);">5 de set. de 2025</span>
<span class="t" style="left:1174.3px;top:562px;font-size:12px;color:#aaa;transform:scaleX(0.8801);">9 de set. de...</span>
<span class="t" style="left:390.9px;top:437.1px;font-size:11.6px;font-weight:700;-webkit-text-stroke:0;transform:scaleX(0.9184);">Seg., 18 de ago. de 2025</span>
<span class="t" style="left:391.9px;top:457.2px;font-size:23.6px;color:#8b83f6;transform:scaleX(0.9528);-webkit-text-stroke:0;">11.074</span>
<span class="t" style="left:807.0px;top:534.6px;font-size:10.5px;font-weight:700;-webkit-text-stroke:0;transform:scaleX(1.1123);">2</span>
<span class="t" style="left:288.7px;top:615px;font-size:13.5px;font-weight:700;-webkit-text-stroke:0;transform:scaleX(0.9055);">Ver mais</span>
<span class="t" style="left:274.7px;top:704.8px;font-size:16.5px;font-weight:700;-webkit-text-stroke:0;transform:scaleX(0.9204);">Como os espectadores acham seus Shorts</span>
<span class="t" style="left:826.3px;top:705px;font-size:16.5px;font-weight:700;-webkit-text-stroke:0;transform:scaleX(0.9175);">Engajamento dos espectadores</span>
</div>
</body>
</html>
